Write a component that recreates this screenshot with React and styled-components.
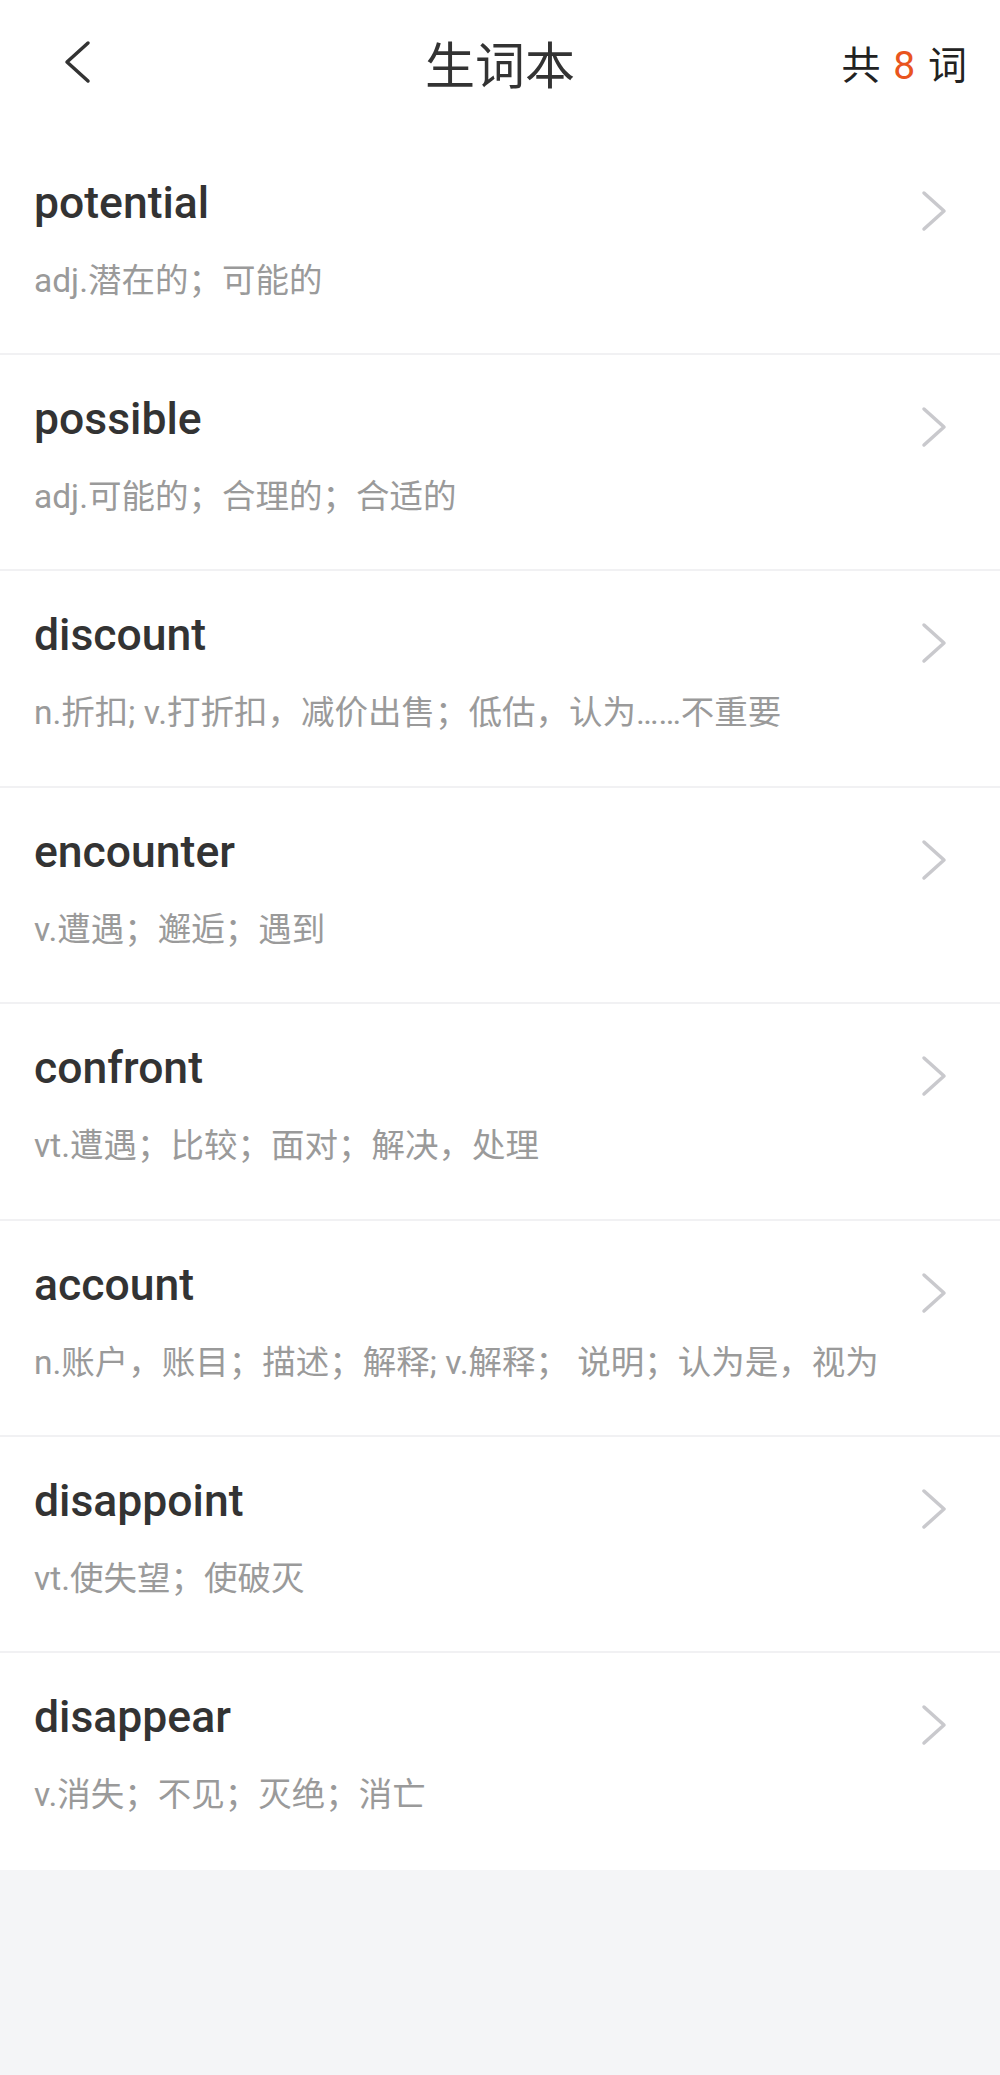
import React from 'react';
import styled, { createGlobalStyle } from 'styled-components';

const words = [
  { word: 'potential', meaning: 'adj.潜在的；可能的' },
  { word: 'possible', meaning: 'adj.可能的；合理的；合适的' },
  { word: 'discount', meaning: 'n.折扣; v.打折扣，减价出售；低估，认为……不重要' },
  { word: 'encounter', meaning: 'v.遭遇；邂逅；遇到' },
  { word: 'confront', meaning: 'vt.遭遇；比较；面对；解决，处理' },
  { word: 'account', meaning: 'n.账户，账目；描述；解释; v.解释； 说明；认为是，视为' },
  { word: 'disappoint', meaning: 'vt.使失望；使破灭' },
  { word: 'disappear', meaning: 'v.消失；不见；灭绝；消亡' },
];

const GlobalStyle = createGlobalStyle`
  body {
    margin: 0;
    background: #f4f5f7;
    font-family: Roboto, "Noto Sans CJK SC", sans-serif;
  }
`;

const Page = styled.div`
  min-height: 2075px;
  background: #f4f5f7;
`;

const Header = styled.header`
  height: 124px;
  display: flex;
  align-items: center;
  justify-content: space-between;
  padding: 0 33px 0 63px;
  background: #fff;
  position: relative;
`;

const BackButton = styled.button`
  border: none;
  background: none;
  padding: 0;
  width: 34px;
  height: 46px;
  display: flex;
  align-items: center;
  cursor: pointer;
`;

const Title = styled.h1`
  margin: 0;
  font-size: 50px;
  font-weight: 400;
  color: #333;
  font-family: "Noto Sans CJK SC", sans-serif;
  position: absolute;
  left: 50%;
  transform: translateX(-50%);
`;

const Count = styled.div`
  font-size: 39px;
  color: #222;
  font-family: "Noto Sans CJK SC", sans-serif;
  word-spacing: 4px;
`;

const Num = styled.span`
  color: #e9551e;
  font-family: Roboto, sans-serif;
`;

const List = styled.ul`
  list-style: none;
  margin: 0;
  padding: 14.6px 0 0;
  background: #fff;
`;

const Row = styled.li`
  height: 214.4px;
  display: flex;
  align-items: flex-start;
  padding: 0 53px 0 34px;
  border-bottom: 2px solid #f1f1f3;
  &:last-child {
    border-bottom: none;
    height: 216.4px;
  }
`;

const Body = styled.div`
  flex: 1;
  padding-top: 38px;
`;

const Word = styled.div`
  font-size: 44.5px;
  line-height: 52px;
  font-weight: 500;
  color: #333;
`;

const Meaning = styled.div`
  margin-top: 32px;
  font-size: 33.5px;
  line-height: 40px;
  color: #9a9a9a;
  font-family: Roboto, "Noto Sans CJK SC", sans-serif;
`;

const Arrow = styled.span`
  margin-top: 51px;
  display: flex;
`;

const Chevron = ({ color, w, h }) => (
  <svg width={w} height={h} viewBox="0 0 26 42" fill="none">
    <path d="M3 3 L23 21 L3 39" stroke={color} strokeWidth="3.5" strokeLinecap="round" strokeLinejoin="round" />
  </svg>
);

const BackIcon = () => (
  <svg width="28" height="44" viewBox="0 0 28 44" fill="none">
    <path d="M25 3 L4 22 L25 41" stroke="#333" strokeWidth="3.5" strokeLinecap="round" strokeLinejoin="round" />
  </svg>
);

export default function App() {
  return (
    <Page>
      <GlobalStyle />
      <Header>
        <BackButton>
          <BackIcon />
        </BackButton>
        <Title>生词本</Title>
        <Count>
          共 <Num>8</Num> 词
        </Count>
      </Header>
      <List>
        {words.map((item) => (
          <Row key={item.word}>
            <Body>
              <Word>{item.word}</Word>
              <Meaning>{item.meaning}</Meaning>
            </Body>
            <Arrow>
              <Chevron color="#c9c9cd" w={26} h={42} />
            </Arrow>
          </Row>
        ))}
      </List>
    </Page>
  );
}
